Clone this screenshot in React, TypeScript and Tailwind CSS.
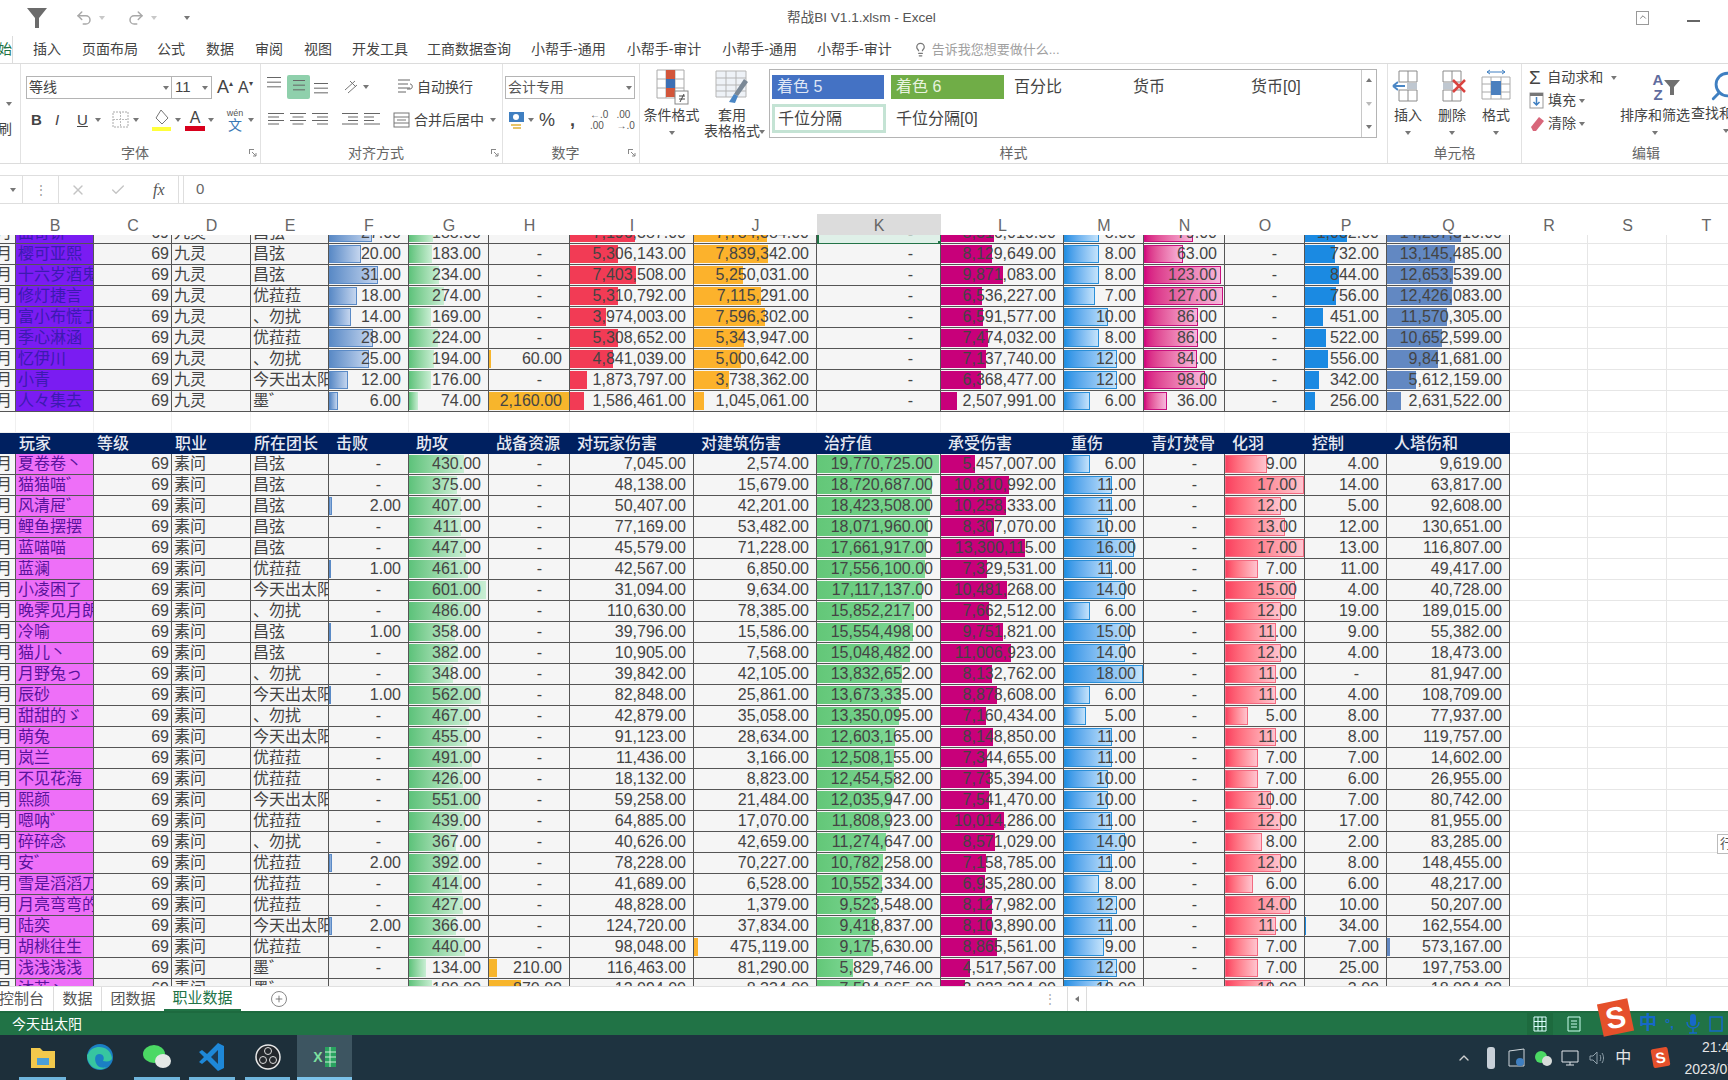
import { Undo2, Redo2, Lightbulb, Search, Plus, X, Check, ChevronUp } from "lucide-react";

type Row = [string, string, number, number, number, number, number, number, number, number, number, number, number, number];

const ROW_GRID =
  "grid grid-cols-[16px_78px_78px_79px_78px_80px_80px_81px_124px_123px_124px_123px_80px_81px_80px_82px_123px_78px_79px_79px] h-[21px] w-[1746px]";

const topRows: Row[] = [
  ["曲奇饼丶", "昌弦", 27, 188, 0, 7196387, 7784384, 0, 8316016, 8, 79, 0, 1032, 14287316],
  ["樱可亚熙", "昌弦", 20, 183, 0, 5306143, 7839342, 0, 8129649, 8, 63, 0, 732, 13145485],
  ["十六岁酒鬼", "昌弦", 31, 234, 0, 7403508, 5250031, 0, 9871083, 8, 123, 0, 844, 12653539],
  ["修灯捷言", "优菈菈", 18, 274, 0, 5310792, 7115291, 0, 6536227, 7, 127, 0, 756, 12426083],
  ["富小布慌丁", "、勿扰", 14, 169, 0, 3974003, 7596302, 0, 6591577, 10, 86, 0, 451, 11570305],
  ["季心淋涵", "优菈菈", 28, 224, 0, 5308652, 5343947, 0, 7474032, 8, 86, 0, 522, 10652599],
  ["忆伊川", "、勿扰", 25, 194, 60, 4841039, 5000642, 0, 7137740, 12, 84, 0, 556, 9841681],
  ["小青", "今天出太阳", 12, 176, 0, 1873797, 3738362, 0, 6368477, 12, 98, 0, 342, 5612159],
  ["人々集去", "墨゛", 6, 74, 2160, 1586461, 1045061, 0, 2507991, 6, 36, 0, 256, 2631522],
];

const bottomRows: Row[] = [
  ["夏卷卷丶", "昌弦", 0, 430, 0, 7045, 2574, 19770725, 5457007, 6, 0, 9, 4, 9619],
  ["猫猫喵゛", "昌弦", 0, 375, 0, 48138, 15679, 18720687, 10810992, 11, 0, 17, 14, 63817],
  ["风清屉゛", "昌弦", 2, 407, 0, 50407, 42201, 18423508, 10258333, 11, 0, 12, 5, 92608],
  ["鲤鱼摆摆", "昌弦", 0, 411, 0, 77169, 53482, 18071960, 8307070, 10, 0, 13, 12, 130651],
  ["蓝喵喵", "昌弦", 0, 447, 0, 45579, 71228, 17661917, 13300115, 16, 0, 17, 13, 116807],
  ["蓝澜", "优菈菈", 1, 461, 0, 42567, 6850, 17556100, 7329531, 11, 0, 7, 11, 49417],
  ["小凌困了", "今天出太阳", 0, 601, 0, 31094, 9634, 17117137, 10481268, 14, 0, 15, 4, 40728],
  ["晚霁见月朗", "、勿扰", 0, 486, 0, 110630, 78385, 15852217, 7662512, 6, 0, 12, 19, 189015],
  ["冷喻", "昌弦", 1, 358, 0, 39796, 15586, 15554498, 9751821, 15, 0, 11, 9, 55382],
  ["猫儿丶", "昌弦", 0, 382, 0, 10905, 7568, 15048482, 11006923, 14, 0, 12, 4, 18473],
  ["月野兔っ", "、勿扰", 0, 348, 0, 39842, 42105, 13832652, 8132762, 18, 0, 11, 0, 81947],
  ["辰砂", "今天出太阳", 1, 562, 0, 82848, 25861, 13673335, 8878608, 6, 0, 11, 4, 108709],
  ["甜甜的ゞ", "、勿扰", 0, 467, 0, 42879, 35058, 13350095, 7160434, 5, 0, 5, 8, 77937],
  ["萌兔", "今天出太阳", 0, 455, 0, 91123, 28634, 12603165, 8148850, 11, 0, 11, 8, 119757],
  ["岚兰", "优菈菈", 0, 491, 0, 11436, 3166, 12508155, 7344655, 11, 0, 7, 7, 14602],
  ["不见花海", "优菈菈", 0, 426, 0, 18132, 8823, 12454582, 7735394, 10, 0, 7, 6, 26955],
  ["熙颜", "今天出太阳", 0, 551, 0, 59258, 21484, 12035947, 7541470, 10, 0, 10, 7, 80742],
  ["嗯呐゛", "优菈菈", 0, 439, 0, 64885, 17070, 11808923, 10014286, 11, 0, 12, 17, 81955],
  ["碎碎念", "、勿扰", 0, 367, 0, 40626, 42659, 11274647, 8571029, 14, 0, 8, 2, 83285],
  ["安゛", "优菈菈", 2, 392, 0, 78228, 70227, 10782258, 7158785, 11, 0, 12, 8, 148455],
  ["雪是滔滔刀", "优菈菈", 0, 414, 0, 41689, 6528, 10552334, 6935280, 8, 0, 6, 6, 48217],
  ["月亮弯弯的", "优菈菈", 0, 427, 0, 48828, 1379, 9523548, 8127982, 12, 0, 14, 10, 50207],
  ["陆奕", "今天出太阳", 2, 366, 0, 124720, 37834, 9418837, 8103890, 11, 0, 11, 34, 162554],
  ["胡桃往生", "优菈菈", 0, 440, 0, 98048, 475119, 9175630, 8865561, 9, 0, 7, 7, 573167],
  ["浅浅浅浅", "墨゛", 0, 134, 210, 116463, 81290, 5829746, 4517567, 12, 0, 7, 25, 197753],
  ["沐若丶", "墨゛", 0, 180, 870, 12094, 8334, 7584865, 3823394, 10, 0, 10, 3, 18094],
];

// index is the position in the Row tuple, from 击败 on
const bars: Record<number, { max: number; cls: string }> = {
  2: { max: 50, cls: "bg-linear-to-r from-[#5a8ac6] to-[#c4d5ee] border border-[#5a8ac6]" },
  3: { max: 620, cls: "bg-linear-to-r from-[#5cc27a] to-[#c9eed4]" },
  4: { max: 2160, cls: "bg-[#f7b52c]" },
  5: { max: 13700000, cls: "bg-[#f23b55]" },
  6: { max: 13000000, cls: "bg-[#fcb22c]" },
  7: { max: 20000000, cls: "bg-linear-to-r from-[#63c778] to-[#7ed895]" },
  8: { max: 19300000, cls: "bg-[#c8007a]" },
  9: { max: 18, cls: "bg-linear-to-r from-[#1f8fe4] to-[#c4e3fb] border border-[#2a8fd8]" },
  10: { max: 128, cls: "bg-linear-to-r from-[#d5007f] to-[#f6b7dc] border border-[#c8107e]" },
  11: { max: 17, cls: "bg-linear-to-r from-[#fa3f5f] to-[#ffc4cf] border border-[#f26a80]" },
  12: { max: 2000, cls: "bg-[#1b8ae2]" },
  13: { max: 23500000, cls: "bg-[#6288c2]" },
};

const fmt = (n: number) =>
  n.toLocaleString("en-US", { minimumFractionDigits: 2, maximumFractionDigits: 2 });

const Caret = ({ className = "" }: { className?: string }) => (
  <svg width="6" height="4" viewBox="0 0 6 4" className={className}>
    <path d="M0 0h6L3 4z" fill="#777" />
  </svg>
);

const Lines = ({ widths, aligned = "left" }: { widths: number[]; aligned?: "left" | "center" | "right" }) => (
  <svg width="18" height="18" viewBox="0 0 18 18">
    {widths.map((w, i) => {
      const x = aligned === "left" ? 1 : aligned === "center" ? 9 - w / 2 : 17 - w;
      return <rect key={i} x={x} y={2 + i * (14 / widths.length)} width={w} height="1" fill="#666" />;
    })}
  </svg>
);

const BigLabel = ({ lines, w, caret }: { lines: string[]; w: string; caret?: boolean }) => (
  <div className={`${w} flex flex-col items-center text-[14px] leading-[16px] text-[#444]`}>
    {lines.map((l) => (
      <span key={l} className="flex items-center whitespace-nowrap">
        {l}
      </span>
    ))}
    {caret && <Caret className="-mt-[9px] ml-[60px]" />}
  </div>
);

const GridIcon = ({ children }: { children: React.ReactNode }) => (
  <svg width="34" height="34" viewBox="0 0 34 34">
    <path d="M8 2h18v11H8zM17 2v11M8 21h18v11H8zM17 21v11" fill="none" stroke="#8a8a8a" />
    {children}
  </svg>
);

const TitleBar = () => (
  <div className="flex h-[36px] shrink-0 items-center bg-white">
    <svg width="26" height="24" viewBox="0 0 26 24" className="ml-[25px]">
      <path d="M2 2h20l-8 10v10h-4V12z" fill="#6b6b6b" />
    </svg>
    <Undo2 size={18} className="ml-[24px] text-[#a8a8a8]" />
    <Caret className="ml-[6px] opacity-40" />
    <Redo2 size={18} className="ml-[22px] text-[#a8a8a8]" />
    <Caret className="ml-[6px] opacity-40" />
    <Caret className="ml-[27px]" />
    <div className="ml-[597px] w-[140px] whitespace-nowrap text-[13.6px] text-[#555]">帮战BI V1.1.xlsm - Excel</div>
    <div className="ml-[709px] flex h-[14px] w-[13px] items-start justify-center border border-[#999]">
      <ChevronUp size={10} className="text-[#666]" />
    </div>
    <div className="ml-[38px] mt-[6px] h-[2px] w-[13px] bg-[#666]" />
  </div>
);

const tabs: [string, string][] = [
  ["插入", "ml-[20px]"],
  ["页面布局", "ml-[21px]"],
  ["公式", "ml-[19px]"],
  ["数据", "ml-[21px]"],
  ["审阅", "ml-[21px]"],
  ["视图", "ml-[21px]"],
  ["开发工具", "ml-[20px]"],
  ["工商数据查询", "ml-[19px]"],
  ["小帮手-通用", "ml-[20px]"],
  ["小帮手-审计", "ml-[21px]"],
  ["小帮手-通用", "ml-[21px]"],
  ["小帮手-审计", "ml-[20px]"],
];

const TabRow = () => (
  <div className="flex h-[28px] shrink-0 items-center border-b border-[#dcdcdc] text-[14px] text-[#444]">
    <div className="flex h-[28px] w-[13px] items-center justify-end overflow-hidden border-r border-[#dcdcdc] text-[#217346]">
      始
    </div>
    {tabs.map(([t, m], i) => (
      <span key={i} className={`${m} whitespace-nowrap`}>
        {t}
      </span>
    ))}
    <Lightbulb size={15} className="ml-[21px] text-[#777]" />
    <span className="ml-[4px] whitespace-nowrap text-[13px] text-[#a0a0a0]">告诉我您想要做什么...</span>
  </div>
);

const GroupLabel = ({ text, launcher = true }: { text: string; launcher?: boolean }) => (
  <div className="flex h-[20px] items-center justify-center text-[14px] text-[#666]">
    <span className="flex-1 text-center">{text}</span>
    {launcher && (
      <svg width="8" height="8" viewBox="0 0 8 8" className="mr-[3px]">
        <path d="M0 .5h5M.5 0v5M3 3l4 4M7 4v3H4" stroke="#888" fill="none" />
      </svg>
    )}
  </div>
);

const FontGroup = () => (
  <div className="flex w-[240px] shrink-0 flex-col border-r border-[#e2e2e2]">
    <div className="flex-1 pl-[5px] pt-[12px]">
      <div className="flex h-[23px] items-center">
        <div className="flex h-[23px] w-[146px] items-center justify-between border border-[#b4b4b4] pl-[2px] pr-[2px] text-[14px] text-[#444]">
          等线
          <Caret />
        </div>
        <div className="flex h-[23px] w-[40px] items-center justify-between border border-l-0 border-[#b4b4b4] px-[3px] text-[15px] text-[#444]">
          11
          <Caret />
        </div>
        <span className="ml-[5px] text-[18px] text-[#444]">A</span>
        <span className="-mt-[8px] text-[8px] text-[#444]">▴</span>
        <span className="ml-[5px] text-[16px] text-[#444]">A</span>
        <span className="-mt-[8px] text-[8px] text-[#444]">▾</span>
      </div>
      <div className="mt-[9px] flex h-[24px] items-center text-[15px] text-[#444]">
        <span className="ml-[5px] w-[20px] font-bold">B</span>
        <span className="ml-[4px] w-[20px] italic">I</span>
        <span className="ml-[2px] w-[13px] underline">U</span>
        <Caret className="ml-[5px]" />
        <svg width="18" height="18" viewBox="0 0 18 18" className="ml-[11px]">
          <rect x="1" y="1" width="15" height="15" fill="none" stroke="#aaa" strokeDasharray="2 1" />
          <path d="M1 8.5h15M8.5 1v15" stroke="#bbb" strokeDasharray="2 1" />
        </svg>
        <Caret className="ml-[3px]" />
        <svg width="22" height="24" viewBox="0 0 22 24" className="ml-[12px]">
          <path d="M10 2l7 8-6 6-6-6z" fill="#fff" stroke="#777" />
          <rect x="1" y="19" width="19" height="4" fill="#ffff3a" />
        </svg>
        <Caret className="ml-[2px]" />
        <div className="ml-[4px] flex w-[20px] flex-col items-center">
          <span className="text-[16px] leading-[17px]">A</span>
          <div className="h-[5px] w-[20px] bg-[#d8001c]" />
        </div>
        <Caret className="ml-[3px]" />
        <div className="ml-[11px] flex w-[20px] flex-col items-center leading-none">
          <span className="text-[9px] text-[#555]">wén</span>
          <span className="text-[14px] text-[#3a78b5]">文</span>
        </div>
        <Caret className="ml-[3px]" />
      </div>
    </div>
    <GroupLabel text="字体" />
  </div>
);

const AlignGroup = () => (
  <div className="flex w-[242px] shrink-0 flex-col border-r border-[#e2e2e2]">
    <div className="flex-1 pl-[4px] pt-[11px]">
      <div className="flex h-[24px] items-center">
        <div className="flex w-[20px] -translate-y-[3px] justify-center"><Lines widths={[14, 14, 14]} /></div>
        <div className="ml-[2px] flex h-[24px] w-[23px] items-center justify-center rounded-[2px] bg-[#8fd0ac]">
          <Lines widths={[12, 12, 12]} aligned="center" />
        </div>
        <div className="ml-[2px] flex w-[20px] translate-y-[3px] justify-center"><Lines widths={[14, 14, 14]} /></div>
        <svg width="18" height="18" viewBox="0 0 18 18" className="ml-[10px]">
          <path d="M3 12L13 3M6 15l9-8M8 3l6 6" stroke="#777" fill="none" />
        </svg>
        <Caret className="ml-[3px]" />
        <svg width="18" height="18" viewBox="0 0 18 18" className="ml-[27px]">
          <path d="M2 2h12M2 6h10M2 10h12M2 14h8M14 6c3 0 3 5 0 5h-3" stroke="#666" fill="none" />
        </svg>
        <span className="ml-[3px] text-[14px] text-[#444]">自动换行</span>
      </div>
      <div className="mt-[9px] flex h-[24px] items-center">
        <div className="ml-[1px] flex w-[20px] justify-center"><Lines widths={[16, 11, 16, 11]} /></div>
        <div className="ml-[2px] flex w-[20px] justify-center"><Lines widths={[16, 11, 16, 11]} aligned="center" /></div>
        <div className="ml-[2px] flex w-[20px] justify-center"><Lines widths={[16, 11, 16, 11]} aligned="right" /></div>
        <div className="ml-[10px] flex w-[20px] justify-center"><Lines widths={[16, 10, 10, 16]} aligned="right" /></div>
        <div className="ml-[2px] flex w-[20px] justify-center"><Lines widths={[16, 10, 10, 16]} /></div>
        <svg width="18" height="18" viewBox="0 0 18 18" className="ml-[11px]">
          <rect x="1" y="2" width="15" height="14" fill="none" stroke="#777" />
          <path d="M1 6h15M1 12h15M4 9h9" stroke="#777" />
        </svg>
        <span className="ml-[3px] whitespace-nowrap text-[14px] text-[#444]">合并后居中</span>
        <Caret className="ml-[6px]" />
      </div>
    </div>
    <GroupLabel text="对齐方式" />
  </div>
);

const NumberGroup = () => (
  <div className="flex w-[137px] shrink-0 flex-col border-r border-[#e2e2e2]">
    <div className="flex-1 pl-[2px] pt-[12px]">
      <div className="flex h-[23px] w-[130px] items-center justify-between border border-[#b4b4b4] px-[2px] text-[14px] text-[#555]">
        会计专用
        <Caret />
      </div>
      <div className="mt-[9px] flex h-[24px] items-center text-[#444]">
        <svg width="18" height="18" viewBox="0 0 18 18" className="ml-[3px]">
          <rect x="1" y="1" width="15" height="10" fill="#3f7fc1" />
          <circle cx="8" cy="6" r="3" fill="#fff" />
          <path d="M3 14h10M5 17h8" stroke="#e6c46a" strokeWidth="2" />
        </svg>
        <Caret className="ml-[2px]" />
        <span className="ml-[5px] text-[18px] leading-none">%</span>
        <span className="ml-[15px] text-[18px] font-bold leading-none">,</span>
        <div className="ml-[15px] flex flex-col text-[10px] leading-[11px] text-[#555]">
          <span>←.0</span>
          <span>.00</span>
        </div>
        <div className="ml-[8px] flex flex-col text-[10px] leading-[11px] text-[#555]">
          <span>.00</span>
          <span>→.0</span>
        </div>
      </div>
    </div>
    <GroupLabel text="数字" />
  </div>
);

const Swatch = ({ text, cls }: { text: string; cls: string }) => (
  <div className={`flex items-center whitespace-nowrap text-[16px] ${cls}`}>{text}</div>
);

const StylesGroup = () => (
  <div className="flex w-[748px] shrink-0 flex-col border-r border-[#e2e2e2]">
    <div className="flex flex-1 pt-[5px]">
      <div className="flex w-[63px] flex-col items-center">
        <svg width="36" height="36" viewBox="0 0 36 36">
          <path d="M3 1h27v28H3zM12 1v28M21 1v28M3 10h27M3 19h27" fill="#fff" stroke="#aaa" />
          <rect x="12" y="1" width="9" height="9" fill="#d2553a" />
          <rect x="12" y="10" width="9" height="9" fill="#3c6fb4" />
          <rect x="12" y="19" width="9" height="9" fill="#d2553a" />
          <rect x="21" y="22" width="13" height="13" fill="#fff" stroke="#888" />
          <path d="M25 27h6M25 30h6M30 25l-4 8" stroke="#444" fill="none" />
        </svg>
        <BigLabel lines={["条件格式"]} w="w-[63px] mt-[2px]" />
        <Caret className="mt-[8px]" />
      </div>
      <div className="flex w-[64px] flex-col items-center pr-[6px]">
        <svg width="36" height="36" viewBox="0 0 36 36">
          <path d="M2 2h30v26H2zM12 2v26M22 2v26M2 9h30M2 16h30M2 22h30" fill="#eef2f7" stroke="#b5b5b5" />
          <path d="M30 10l4 3-10 14-4-2z" fill="#7a8896" />
          <path d="M20 25l4 2-3 7-6-1z" fill="#4a86c5" />
        </svg>
        <BigLabel lines={["套用", "表格格式"]} w="w-[58px] mt-[2px]" caret />
      </div>
      <div className="ml-[2px] mt-[0px] flex h-[69px] w-[608px] border border-[#b4b4b4]">
        <div className="flex-1 pl-[2px] pt-[5px]">
          <div className="flex h-[24px]">
            <Swatch text="着色 5" cls="w-[112px] bg-[#4472c4] pl-[5px] text-[15px] text-[#dfe6f5]" />
            <Swatch text="着色 6" cls="ml-[7px] w-[113px] bg-[#70ad47] pl-[5px] text-[15px] text-[#e8f3df]" />
            <Swatch text="百分比" cls="ml-[10px] w-[119px] text-[#444]" />
            <Swatch text="货币" cls="w-[118px] text-[#444]" />
            <Swatch text="货币[0]" cls="text-[#444]" />
          </div>
          <div className="mt-[5px] flex h-[29px]">
            <Swatch text="千位分隔" cls="w-[114px] border-[3px] border-[#c4e3d4] pl-[3px] text-[#444]" />
            <Swatch text="千位分隔[0]" cls="ml-[10px] text-[#444]" />
          </div>
        </div>
        <div className="flex w-[15px] flex-col items-center justify-between border-l border-[#c8c8c8] py-[8px]">
          <Caret className="rotate-180" />
          <Caret className="opacity-50" />
          <Caret />
        </div>
      </div>
    </div>
    <GroupLabel text="样式" launcher={false} />
  </div>
);

const CellsGroup = () => (
  <div className="flex w-[134px] shrink-0 flex-col border-r border-[#e2e2e2]">
    <div className="-ml-[2px] flex flex-1 pt-[5px]">
      <div className="flex w-[44px] flex-col items-center">
        <GridIcon>
          <path d="M14 17H2M2 17l5-4M2 17l5 4" stroke="#4a86c5" strokeWidth="2" fill="none" />
          <rect x="16" y="14" width="10" height="6" fill="#bfc7d0" />
        </GridIcon>
        <BigLabel lines={["插入"]} w="w-[44px] mt-[4px]" />
        <Caret className="mt-[8px]" />
      </div>
      <div className="flex w-[44px] flex-col items-center">
        <GridIcon>
          <rect x="8" y="14" width="10" height="6" fill="#bfc7d0" />
          <path d="M18 11l12 12M30 11L18 23" stroke="#d9433f" strokeWidth="2.5" />
        </GridIcon>
        <BigLabel lines={["删除"]} w="w-[44px] mt-[4px]" />
        <Caret className="mt-[8px]" />
      </div>
      <div className="flex w-[44px] flex-col items-center">
        <svg width="34" height="34" viewBox="0 0 34 34">
          <path d="M3 8h28v22H3zM12 8v22M22 8v22M3 15h28M3 23h28" fill="#fff" stroke="#aaa" />
          <rect x="12" y="12" width="10" height="14" fill="#4a7fbe" />
          <path d="M8 3h18M8 3l3-2M8 3l3 2M26 3l-3-2M26 3l-3 2" stroke="#3f7fc1" fill="none" />
        </svg>
        <BigLabel lines={["格式"]} w="w-[44px] mt-[4px]" />
        <Caret className="mt-[8px]" />
      </div>
    </div>
    <GroupLabel text="单元格" launcher={false} />
  </div>
);

const EditingGroup = () => (
  <div className="flex w-[206px] shrink-0 flex-col">
    <div className="flex flex-1 pt-[3px]">
      <div className="ml-[7px] flex w-[88px] flex-col gap-[2px] text-[14px] text-[#444]">
        <div className="flex h-[21px] items-center whitespace-nowrap">
          <span className="w-[19px] text-[19px] leading-none">Σ</span>
          自动求和
          <Caret className="ml-[8px]" />
        </div>
        <div className="flex h-[21px] items-center whitespace-nowrap">
          <svg width="18" height="18" viewBox="0 0 18 18" className="mr-[1px]">
            <rect x="1" y="1" width="13" height="15" fill="none" stroke="#999" />
            <rect x="1" y="1" width="13" height="3" fill="#777" />
            <path d="M7.5 5v8M4.5 10l3 3 3-3" stroke="#3f7fc1" fill="none" strokeWidth="1.5" />
          </svg>
          填充
          <Caret className="ml-[3px]" />
        </div>
        <div className="flex h-[21px] items-center whitespace-nowrap">
          <svg width="18" height="18" viewBox="0 0 18 18" className="mr-[1px]">
            <path d="M2 12L10 2l5 4-8 10H4z" fill="#d8667a" />
          </svg>
          清除
          <Caret className="ml-[3px]" />
        </div>
      </div>
      <div className="ml-[3px] flex w-[70px] flex-col items-center pt-[2px]">
        <div className="flex h-[36px] items-center pl-[24px] text-[15px] font-bold leading-[15px] text-[#5f6c9e]">
          <div className="flex flex-col items-center">
            <span>A</span>
            <span>Z</span>
          </div>
          <svg width="18" height="18" viewBox="0 0 18 18">
            <path d="M1 2h16l-6 7v8H7V9z" fill="#707070" />
          </svg>
        </div>
        <BigLabel lines={["排序和筛选"]} w="w-[70px] mt-[2px]" />
        <Caret className="mt-[8px]" />
      </div>
      <div className="ml-[1px] flex w-[50px] flex-col items-start overflow-hidden pt-[2px]">
        <Search size={34} className="ml-[18px] -scale-x-100 text-[#3f7fc1]" />
        <span className="mt-[2px] whitespace-nowrap text-[14px] leading-[16px] text-[#444]">查找和选择</span>
        <Caret className="ml-[32px] mt-[8px]" />
      </div>
    </div>
    <div className="pl-[42px]">
      <GroupLabel text="编辑" launcher={false} />
    </div>
  </div>
);

const Ribbon = () => (
  <div className="flex h-[100px] shrink-0 border-b border-[#dcdcdc] bg-white">
    <div className="flex w-[21px] shrink-0 flex-col items-end overflow-hidden border-r border-[#e2e2e2] pr-[8px] pt-[38px] text-[14px] text-[#444]">
      <Caret />
      <span className="mt-[13px] whitespace-nowrap">刷</span>
    </div>
    <FontGroup />
    <AlignGroup />
    <NumberGroup />
    <StylesGroup />
    <CellsGroup />
    <EditingGroup />
  </div>
);

const FormulaBar = () => (
  <div className="mt-[11px] flex h-[29px] shrink-0 items-center border-y border-[#dedede] bg-white">
    <div className="flex h-full w-[23px] items-center justify-end border-r border-[#dedede] pr-[6px]">
      <Caret />
    </div>
    <div className="flex w-[35px] justify-center text-[12px] tracking-tight text-[#999]">⋮</div>
    <div className="flex h-full w-[121px] items-center border-x border-[#dedede]">
      <X size={16} className="ml-[11px] text-[#c4c4c4]" />
      <Check size={16} className="ml-[24px] text-[#c4c4c4]" />
      <span className="ml-[27px] font-['Liberation_Serif',serif] text-[16px] italic text-[#555]">fx</span>
    </div>
    <div className="ml-[4px] h-full w-px bg-[#dedede]" />
    <span className="ml-[12px] text-[15px] text-[#666]">0</span>
  </div>
);

const letters = ["", "B", "C", "D", "E", "F", "G", "H", "I", "J", "K", "L", "M", "N", "O", "P", "Q", "R", "S", "T"];

const ColumnHeaders = () => (
  <div className={`${ROW_GRID} mt-[10px] shrink-0 bg-white text-[16px] text-[#666]`}>
    {letters.map((l, i) => (
      <div key={i} className={`flex items-center justify-center ${l === "K" ? "bg-[#dcdcdc]" : ""}`}>
        {l}
      </div>
    ))}
  </div>
);

const Filler = () => (
  <>
    <div className="border-b border-r border-[#e6e6e6]" />
    <div className="border-b border-r border-[#e6e6e6]" />
    <div className="border-b border-r border-[#e6e6e6]" />
  </>
);

const LeadCell = () => (
  <div className="flex items-center justify-end overflow-hidden border-b border-r border-[#555] bg-[#f7f7f7] pr-[3px] text-[#444]">
    月
  </div>
);

const TextCell = ({ text, align = "left", cls = "" }: { text: string; align?: "left" | "right"; cls?: string }) => (
  <div
    className={`flex items-center overflow-hidden whitespace-nowrap border-b border-r border-[#555] ${
      align === "right" ? "justify-end pr-[2px]" : "pl-[2px]"
    } ${cls || "bg-[#f5f5f5]"}`}
  >
    {text}
  </div>
);

const ValueCell = ({ value, col, selected }: { value: number; col: number; selected?: boolean }) => {
  const bar = bars[col];
  const ratio = bar ? Math.min(value / bar.max, 1) : 0;
  return (
    <div
      className={`relative grid overflow-visible border-b border-r border-[#555] ${
        selected ? "border-2 border-[#217346] bg-[#dff0e8]" : "bg-[#f5f5f5]"
      }`}
    >
      {ratio >= 0.015 && (
        <div
          className={`col-start-1 row-start-1 my-[1px] justify-self-start ${bar.cls}`}
          style={{ width: `${ratio * 100}%` }}
        />
      )}
      <div
        className={`col-start-1 row-start-1 flex items-center justify-end overflow-hidden whitespace-nowrap ${
          value === 0 ? "pr-[27px]" : "pr-[7px]"
        }`}
      >
        {value === 0 ? "-" : fmt(value)}
      </div>
      {selected && <div className="absolute -bottom-[3px] -right-[3px] h-[5px] w-[5px] bg-[#217346]" />}
    </div>
  );
};

const DataRow = ({ row, nameCls, selected }: { row: Row; nameCls: string; selected?: boolean }) => {
  const [name, lead, ...values] = row;
  const job = nameCls === TOP_NAME ? "九灵" : "素问";
  return (
    <div className={ROW_GRID}>
      <LeadCell />
      <TextCell text={name} cls={nameCls} />
      <TextCell text="69" align="right" />
      <TextCell text={job} />
      <TextCell text={lead} />
      {values.map((v, i) => (
        <ValueCell key={i} value={v} col={i + 2} selected={selected && i + 2 === 7} />
      ))}
      <Filler />
    </div>
  );
};

const TOP_NAME = "bg-[#7a1cf2] text-[#3c1ab0]";
const BOTTOM_NAME = "bg-[#ee6ff8] text-[#5a139c]";

const heads = ["玩家", "等级", "职业", "所在团长", "击败", "助攻", "战备资源", "对玩家伤害", "对建筑伤害", "治疗值", "承受伤害", "重伤", "青灯焚骨", "化羽", "控制", "人塔伤和"];

const Sheet = () => (
  <div className="h-[751px] shrink-0 overflow-hidden bg-white text-[16px] leading-none text-[#444]">
    <div className="-mt-[12px]">
      {topRows.map((r, i) => (
        <DataRow key={r[0]} row={r} nameCls={TOP_NAME} selected={i === 0} />
      ))}
      <div className={ROW_GRID}>
        {Array.from({ length: 20 }).map((_, i) => (
          <div key={i} className="border-b border-r border-[#f0f0f0]" />
        ))}
      </div>
      <div className={`${ROW_GRID} font-medium text-[#e6e9f2]`}>
        <div className="bg-[#002060]" />
        {heads.map((h, i) => (
          <div
            key={h}
            className={`flex items-center overflow-hidden whitespace-nowrap bg-[#002060] ${i < 4 ? "pl-[3px]" : "pl-[7px]"}`}
          >
            {h}
          </div>
        ))}
        <Filler />
      </div>
      {bottomRows.map((r) => (
        <DataRow key={r[0]} row={r} nameCls={BOTTOM_NAME} />
      ))}
    </div>
  </div>
);

const SheetTabs = () => (
  <div className="flex h-[25px] shrink-0 items-center border-t border-[#e0e0e0] bg-white text-[15px] text-[#555]">
    <div className="flex h-full w-[54px] items-center justify-end whitespace-nowrap border-r border-[#dcdcdc] pr-[9px]">
      <span className="-ml-[10px]">控制台</span>
    </div>
    <div className="flex h-full w-[48px] items-center justify-center border-r border-[#dcdcdc]">数据</div>
    <div className="flex h-full w-[62px] items-center justify-center">团数据</div>
    <div className="flex h-full w-[77px] items-center justify-center border-b-2 border-[#217346] text-[#217346]">职业数据</div>
    <div className="ml-[30px] flex h-[16px] w-[16px] items-center justify-center rounded-full border border-[#888]">
      <Plus size={10} className="text-[#666]" />
    </div>
    <div className="ml-[757px] text-[12px] text-[#aaa]">⋮</div>
    <div className="ml-[11px] flex h-full w-[20px] items-center justify-center border-x border-[#dcdcdc]">
      <Caret className="rotate-90" />
    </div>
  </div>
);

const StatusBar = () => (
  <div className="flex h-[24px] shrink-0 items-center border-t-2 border-[#1d6a3f] bg-[#217346] text-[14px] text-white">
    <span className="ml-[12px]">今天出太阳</span>
    <div className="ml-auto flex h-full w-[26px] items-center justify-center bg-[#1d6a3e]">
      <svg width="14" height="16" viewBox="0 0 14 16">
        <path d="M1 1h12v14H1zM5 1v14M9 1v14M1 5.5h12M1 10.5h12" fill="none" stroke="#dff" />
      </svg>
    </div>
    <div className="ml-[14px] mr-[147px] flex h-full items-center">
      <svg width="14" height="16" viewBox="0 0 14 16">
        <path d="M1 1h12v14H1zM4 5h6M4 8h6M4 11h6" fill="none" stroke="#cfe" />
      </svg>
    </div>
  </div>
);

const appIcons = [
  {
    slot: "w-[47px] mr-[10px]",
    under: true,
    icon: (
      <svg width="26" height="24" viewBox="0 0 26 24">
        <path d="M1 3h9l3 3h12v17H1z" fill="#f2c94c" />
        <rect x="7" y="13" width="12" height="7" fill="#4a9fd8" />
      </svg>
    ),
  },
  {
    slot: "w-[48px] mr-[10px]",
    under: false,
    icon: (
      <svg width="28" height="28" viewBox="0 0 28 28">
        <circle cx="14" cy="14" r="13" fill="#1b7fc4" />
        <path d="M2 11C6 1 24 1 26 15c0 3-4 4-9 3 2-4 0-7-4-7-5 0-5 8-1 12 2 2 7 2 9 1-8 6-20 0-20-12z" fill="#37c5a0" />
      </svg>
    ),
  },
  {
    slot: "w-[46px] mr-[9px]",
    under: true,
    icon: (
      <svg width="30" height="28" viewBox="0 0 30 28">
        <ellipse cx="12" cy="11" rx="11" ry="9" fill="#4bd964" />
        <ellipse cx="21" cy="18" rx="8" ry="7" fill="#e4e8e6" />
      </svg>
    ),
  },
  {
    slot: "w-[46px] mr-[10px]",
    under: true,
    icon: (
      <svg width="26" height="30" viewBox="0 0 26 30">
        <path d="M19 1l6 3v22l-6 3L8 18l-5 4-3-2 5-5-5-5 3-2 5 4z" fill="#1e88d8" />
        <path d="M19 8v14l-7-7z" fill="#1d3a52" />
      </svg>
    ),
  },
  {
    slot: "w-[45px]",
    under: true,
    icon: (
      <svg width="26" height="28" viewBox="0 0 26 28">
        <circle cx="13" cy="14" r="12" fill="#24282c" stroke="#e8e8e8" strokeWidth="1.5" />
        <circle cx="13" cy="8" r="3.5" fill="none" stroke="#ddd" />
        <circle cx="8" cy="17" r="3.5" fill="none" stroke="#ddd" />
        <circle cx="18" cy="17" r="3.5" fill="none" stroke="#ddd" />
      </svg>
    ),
  },
];

const Tray = ({ children }: { children: React.ReactNode }) => (
  <div className="flex w-[26.5px] shrink-0 items-center justify-center">{children}</div>
);

const Taskbar = () => (
  <div className="flex flex-1 bg-[#1e3340]">
    <div className="flex w-[297px] shrink-0 items-stretch bg-[#1d2f3a] pl-[19px]">
      {appIcons.map((a, i) => (
        <div key={i} className={`flex flex-col items-center justify-between ${a.slot}`}>
          <div className="mt-[7px] flex h-[30px] items-center">{a.icon}</div>
          <div className={`h-[3px] w-full ${a.under ? "bg-[#6fb5dc]" : ""}`} />
        </div>
      ))}
    </div>
    <div className="flex w-[55px] shrink-0 flex-col items-center justify-between bg-[#3d5561]">
      <div className="mt-[7px] flex h-[30px] items-center gap-[2px]">
        <span className="text-[14px] font-bold text-[#7ee0a0]">X</span>
        <svg width="11" height="20" viewBox="0 0 11 20">
          <path d="M0 0h11v20H0z" fill="#29a35f" />
          <path d="M0 5h11M0 10h11M0 15h11M5 0v20" stroke="#cdecd9" />
        </svg>
      </div>
      <div className="h-[3px] w-full bg-[#7cc3ea]" />
    </div>
    <div className="ml-[1099px] flex shrink-0 items-center whitespace-nowrap text-[#e6e6e6]">
      <Tray><ChevronUp size={16} className="text-[#d0d0d0]" /></Tray>
      <Tray><div className="h-[22px] w-[8px] rounded-[3px] bg-[#c8d0d8]" /></Tray>
      <Tray>
        <svg width="20" height="20" viewBox="0 0 20 20">
          <path d="M2 3l15-2v17H2z" fill="none" stroke="#cfd6db" />
          <circle cx="13" cy="14" r="4" fill="#3f7fc1" />
        </svg>
      </Tray>
      <Tray>
        <svg width="22" height="20" viewBox="0 0 22 20">
          <circle cx="8" cy="9" r="6" fill="#4bd964" />
          <circle cx="14" cy="13" r="5" fill="#d8dcda" />
        </svg>
      </Tray>
      <Tray>
        <svg width="20" height="20" viewBox="0 0 20 20">
          <path d="M2 3h16v11H2zM10 14v3M6 17h8" fill="none" stroke="#dfe4e8" />
        </svg>
      </Tray>
      <Tray>
        <svg width="16" height="18" viewBox="0 0 16 18">
          <path d="M1 7h3l4-4v12l-4-4H1zM11 6c1 2 1 4 0 6M13 4c2 3 2 7 0 10" fill="none" stroke="#8fa0aa" />
        </svg>
      </Tray>
      <Tray><span className="text-[16px]">中</span></Tray>
      <div className="ml-[15px] flex h-[19px] w-[17px] rotate-[-10deg] items-center justify-center rounded-[2px] bg-[#e5502b] text-[15px] font-bold leading-none text-white">
        S
      </div>
      <div className="ml-[15px] flex w-[72px] shrink-0 flex-col items-center text-[14px] leading-[22px]">
        <span>21:45</span>
        <span>2023/07/14</span>
      </div>
    </div>
  </div>
);

export default function App() {
  return (
    <div className="relative flex h-[1080px] w-[1728px] flex-col overflow-hidden bg-white [font-family:'Liberation_Sans','Noto_Sans_CJK_SC',sans-serif]">
      <TitleBar />
      <TabRow />
      <Ribbon />
      <FormulaBar />
      <ColumnHeaders />
      <Sheet />
      <SheetTabs />
      <StatusBar />
      <Taskbar />
      {/* 搜狗输入法浮窗 */}
      <div className="absolute left-[1600px] top-[1001px] flex h-[33px] w-[31px] rotate-[-12deg] items-center justify-center bg-[#e5502b] text-[30px] font-bold leading-none text-white">
        S
      </div>
      <div className="absolute left-[1639px] top-[1012px] flex h-[23px] items-center text-[18px] font-bold text-[#1668c8]">
        <span>中</span>
        <span className="ml-[8px] text-[13px]">°,</span>
        <svg width="14" height="22" viewBox="0 0 14 22" className="ml-[12px]">
          <rect x="4" y="1" width="6" height="12" rx="3" fill="#1668c8" />
          <path d="M1 9c0 8 12 8 12 0M7 15v5M3 20h8" fill="none" stroke="#1668c8" strokeWidth="1.5" />
        </svg>
        <svg width="14" height="16" viewBox="0 0 14 16" className="ml-[9px]">
          <rect x="1" y="1" width="12" height="14" fill="none" stroke="#1668c8" strokeWidth="1.5" />
        </svg>
      </div>
      {/* 滚动条提示 */}
      <div className="absolute left-[1717px] top-[834px] flex h-[20px] w-[20px] items-center border border-[#bbb] bg-white pl-[2px] text-[13px] text-[#555]">
        行
      </div>
    </div>
  );
}
